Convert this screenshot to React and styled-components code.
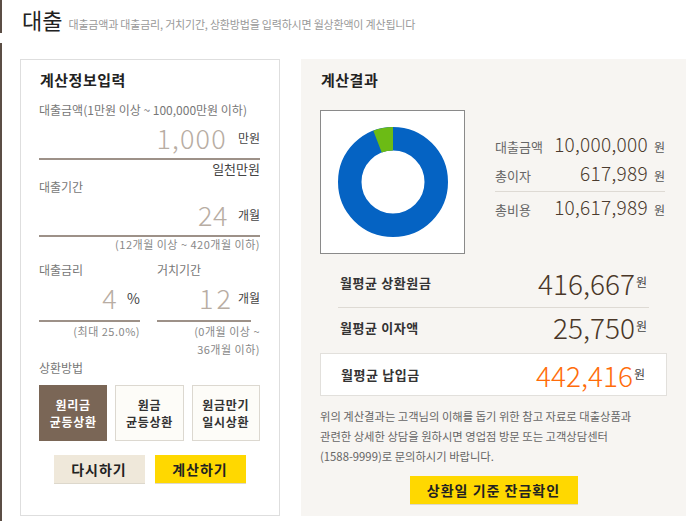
import styled, { createGlobalStyle } from 'styled-components';

const GlobalStyle = createGlobalStyle`
  body {
    margin: 0;
    background: #fff;
    font-family: 'Noto Sans CJK KR', 'Noto Sans', sans-serif;
    color: #333;
  }
  * { box-sizing: border-box; }
`;

const repayOptions = [
  { id: 'equal', label: ['원리금', '균등상환'], active: true },
  { id: 'principal', label: ['원금', '균등상환'] },
  { id: 'bullet', label: ['원금만기', '일시상환'] }
];

const summary = [
  { label: '대출금액', value: '10,000,000' },
  { label: '총이자', value: '617,989' },
  { label: '총비용', value: '10,617,989', divided: true }
];

const monthly = [
  { label: '월평균 상환원금', value: '416,667', h: 50 },
  { label: '월평균 이자액', value: '25,750', h: 38 },
  { label: '월평균 납입금', value: '442,416', boxed: true }
];

function Donut({ ratio }) {
  const r = 43.25;
  const c = 2 * Math.PI * r;
  const part = c * ratio;
  return (
    <svg width='110' height='110' viewBox='0 0 110 110'>
      <circle cx='55' cy='55' r={r} fill='none' stroke='#0563c3' strokeWidth='23.5' />
      <circle
        cx='55'
        cy='55'
        r={r}
        fill='none'
        stroke='#6cbb15'
        strokeWidth='23.5'
        strokeDasharray={`${part} ${c}`}
        transform={`rotate(${-90 - ratio * 360} 55 55)`}
      />
    </svg>
  );
}

export default function App() {
  return (
    <Page>
      <GlobalStyle />
      <Header>
        <Title>대출</Title>
        <SubTitle>대출금액과 대출금리, 거치기간, 상환방법을 입력하시면 월상환액이 계산됩니다</SubTitle>
      </Header>
      <Body>
        <InputPanel>
          <PanelTitle>계산정보입력</PanelTitle>
          <Label $mt={11}>대출금액(1만원 이상 ~ 100,000만원 이하)</Label>
          <ValueRow $h={37}>
            <Num $ls={1.2}>1,000</Num>
            <Unit $gap={11}>만원</Unit>
          </ValueRow>
          <Reading>일천만원</Reading>
          <Label>대출기간</Label>
          <ValueRow $h={37}>
            <Num>24</Num>
            <Unit $gap={10}>개월</Unit>
          </ValueRow>
          <Hint $lh={15}>(12개월 이상 ~ 420개월 이하)</Hint>
          <TwoCols>
            <div>
              <Label>대출금리</Label>
              <ValueRow $h={39}>
                <Num>4</Num>
                <Unit $gap={10} $big>%</Unit>
              </ValueRow>
              <Hint $lh={18}>(최대 25.0%)</Hint>
            </div>
            <div>
              <Label>거치기간</Label>
              <ValueRow $h={39} $inset={9}>
                <Num $ls={3}>12</Num>
                <Unit $gap={4}>개월</Unit>
              </ValueRow>
              <Hint $lh={18}>
                (0개월 이상 ~<br />
                36개월 이하)
              </Hint>
            </div>
          </TwoCols>
          <Label $mt={1}>상환방법</Label>
          <Options>
            {repayOptions.map(o => (
              <Option key={o.id} $active={o.active}>
                <OptionLine>{o.label[0]}</OptionLine>
                <OptionLine>{o.label[1]}</OptionLine>
              </Option>
            ))}
          </Options>
          <Actions>
            <ActionButton>다시하기</ActionButton>
            <ActionButton $primary>계산하기</ActionButton>
          </Actions>
        </InputPanel>

        <ResultPanel>
          <PanelTitle>계산결과</PanelTitle>
          <ChartRow>
            <ChartBox>
              <Donut ratio={617989 / 10617989} />
            </ChartBox>
            <Summary>
              {summary.map(s => (
                <SummaryRow key={s.label} $divided={s.divided}>
                  <SummaryLabel>{s.label}</SummaryLabel>
                  <SummaryValue>{s.value}</SummaryValue>
                  <SummaryUnit>원</SummaryUnit>
                </SummaryRow>
              ))}
            </Summary>
          </ChartRow>
          <Monthly>
            {monthly.map((m, i) => (
              <MonthlyRow key={m.label} $h={m.h} $boxed={m.boxed} $divided={i === 0}>
                <MonthlyLabel>{m.label}</MonthlyLabel>
                <MonthlyValue $accent={m.boxed}>{m.value}</MonthlyValue>
                <MonthlyUnit>원</MonthlyUnit>
              </MonthlyRow>
            ))}
          </Monthly>
          <Note>
            위의 계산결과는 고객님의 이해를 돕기 위한 참고 자료로 대출상품과
            <br />
            관련한 상세한 상담을 원하시면 영업점 방문 또는 고객상담센터
            <br />
            (1588-9999)로 문의하시기 바랍니다.
          </Note>
          <CheckButton>상환일 기준 잔금확인</CheckButton>
        </ResultPanel>
      </Body>
    </Page>
  );
}

const Page = styled.div`
  width: 700px;
  height: 521px;
  overflow: hidden;
`;

const Header = styled.header`
  height: 33px;
  border-left: 2px solid #5b4e45;
  padding: 6px 0 0 20px;
  display: flex;
  align-items: baseline;
  gap: 6px;
`;

const Title = styled.h1`
  margin: 0;
  font-size: 22px;
  font-weight: 400;
  line-height: 26px;
  color: #222;
`;

const SubTitle = styled.span`
  font-size: 11px;
  letter-spacing: -0.2px;
  color: #999;
`;

const Body = styled.div`
  margin-top: 10px;
  height: 478px;
  border-left: 2px solid #5b4e45;
  padding: 16px 0 5px 18px;
  display: flex;
  gap: 21px;
`;

const InputPanel = styled.section`
  width: 260px;
  border: 1px solid #dedede;
  background: #fff;
  padding: 0 19px 0 18px;
`;

const ResultPanel = styled.section`
  width: 385px;
  background: #f7f5f2;
  padding: 1px 19px 0;
`;

const PanelTitle = styled.h2`
  margin: 10px 0 0 1px;
  font-size: 15px;
  font-weight: 700;
  line-height: 20px;
  letter-spacing: 0.5px;
  color: #222;
`;

const Label = styled.div`
  margin-top: ${p => p.$mt || 0}px;
  font-size: 12px;
  line-height: 18px;
  color: #777;
`;

const ValueRow = styled.div`
  height: ${p => p.$h}px;
  margin-top: 4px;
  padding-bottom: 2px;
  display: flex;
  justify-content: flex-end;
  align-items: flex-start;
  background: linear-gradient(#9d9188, #9d9188) left bottom / calc(100% - ${p => p.$inset || 0}px) 2px no-repeat;
`;

const Num = styled.span`
  font-size: 27px;
  font-weight: 300;
  line-height: 30px;
  letter-spacing: ${p => p.$ls || 0.5}px;
  color: #b8ada3;
`;

const Unit = styled.span`
  margin-left: ${p => p.$gap}px;
  font-size: ${p => (p.$big ? 14 : 12)}px;
  line-height: 30px;
  color: #444;
`;

const Reading = styled.div`
  text-align: right;
  font-size: 13px;
  line-height: 18px;
  color: #444;
`;

const Hint = styled.div`
  text-align: right;
  font-size: 11px;
  line-height: ${p => p.$lh || 14}px;
  letter-spacing: 0.5px;
  color: #888;
`;

const TwoCols = styled.div`
  margin-top: 9px;
  display: grid;
  grid-template-columns: 101px 1fr;
  column-gap: 17px;
`;

const Options = styled.div`
  margin-top: 8px;
  display: grid;
  grid-template-columns: repeat(3, 1fr);
  column-gap: 8px;
`;

const Option = styled.button`
  height: 56px;
  padding: 0;
  display: flex;
  flex-direction: column;
  align-items: center;
  justify-content: center;
  font-family: inherit;
  font-size: 12px;
  font-weight: 700;
  letter-spacing: 0.7px;
  border: 1px solid ${p => (p.$active ? '#7a6656' : '#dcd8d0')};
  background: ${p => (p.$active ? '#7a6656' : '#fdfcf8')};
  color: ${p => (p.$active ? '#fff' : '#333')};
`;

const OptionLine = styled.span`
  display: block;
  line-height: 17.5px;
`;

const Actions = styled.div`
  margin-top: 14px;
  display: flex;
  justify-content: center;
  gap: 10px;
`;

const ActionButton = styled.button`
  width: 91px;
  height: 28px;
  padding: 0;
  border: none;
  box-shadow: 0 1px 0 #ddd8cc;
  font-family: inherit;
  font-size: 14px;
  font-weight: 700;
  letter-spacing: 1px;
  color: #222;
  background: ${p => (p.$primary ? '#ffd800' : '#efe8da')};
`;

const ChartRow = styled.div`
  margin-top: 20px;
  display: flex;
  gap: 30px;
`;

const ChartBox = styled.div`
  width: 145px;
  height: 144px;
  border: 1px solid #8a8a8a;
  background: #fff;
  display: flex;
  align-items: center;
  justify-content: center;
  padding-left: 1px;
`;

const Summary = styled.div`
  width: 170px;
  margin-top: 19px;
`;

const SummaryRow = styled.div`
  display: flex;
  align-items: baseline;
  height: 29px;
  line-height: 29px;
  ${p =>
    p.$divided &&
    `
    margin-top: 4px;
    border-top: 1px solid #dedad4;
  `}
`;

const SummaryLabel = styled.span`
  font-size: 13px;
  color: #666;
`;

const SummaryValue = styled.span`
  margin-left: auto;
  font-size: 19px;
  font-weight: 300;
  letter-spacing: 0.3px;
  color: #4b3b2e;
`;

const SummaryUnit = styled.span`
  margin-left: 6px;
  font-size: 12px;
  color: #555;
`;

const Monthly = styled.div`
  margin-top: 4px;
`;

const MonthlyRow = styled.div`
  display: flex;
  align-items: center;
  height: ${p => (p.$boxed ? 43 : p.$h)}px;
  margin: ${p => (p.$boxed ? '7px 0 0' : '0 18px')};
  padding: ${p => (p.$boxed ? '0 21px 0 20px' : '0 2px')};
  border-bottom: ${p => (p.$divided ? '1px solid #dedad4' : 'none')};
  ${p =>
    p.$boxed &&
    `
    background: #fff;
    border: 1px solid #e2e0dc;
  `}
`;

const MonthlyLabel = styled.span`
  font-size: 13px;
  font-weight: 700;
  letter-spacing: 0.6px;
  color: #333;
`;

const MonthlyValue = styled.span`
  margin-left: auto;
  font-size: 28px;
  font-weight: 300;
  line-height: 30px;
  color: ${p => (p.$accent ? '#ff6c0a' : '#4a3728')};
`;

const MonthlyUnit = styled.span`
  margin: 0 0 3px 1px;
  font-size: 12px;
  color: #444;
`;

const Note = styled.p`
  margin: 10px 0 0;
  font-size: 11.3px;
  line-height: 20px;
  color: #666;
`;

const CheckButton = styled.button`
  display: block;
  width: 168px;
  height: 28px;
  margin: 10px auto 0;
  padding: 0;
  border: none;
  box-shadow: 0 1px 0 #ddd8cc;
  background: #ffd800;
  font-family: inherit;
  font-size: 14px;
  font-weight: 700;
  letter-spacing: 1px;
  color: #222;
`;
